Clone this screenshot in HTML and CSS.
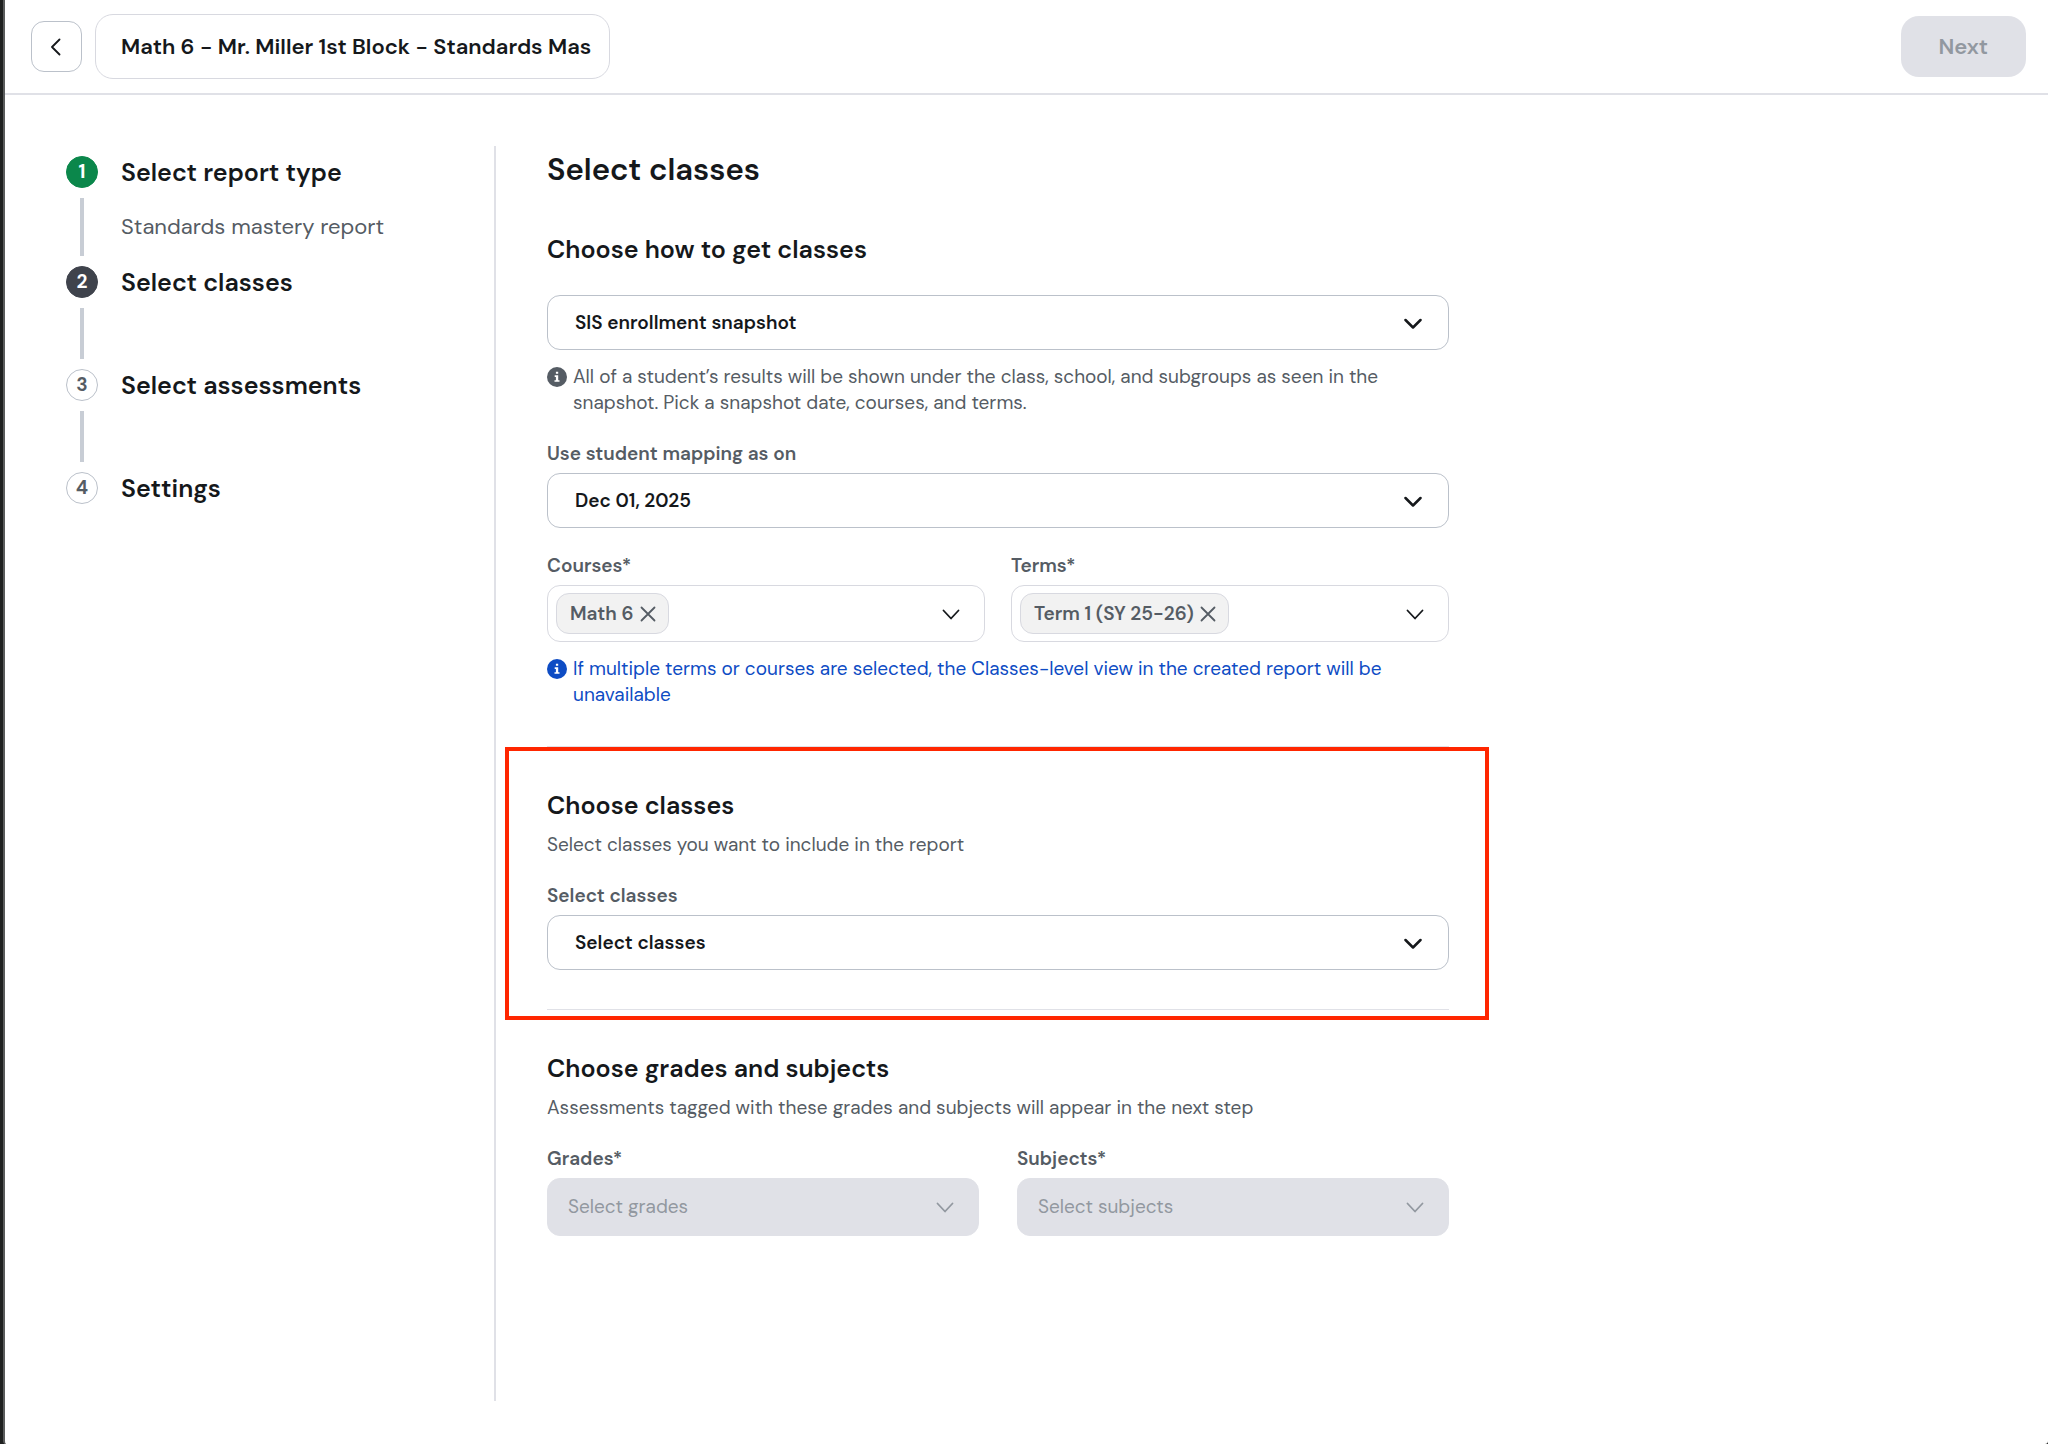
FILE: index.html
```html
<!DOCTYPE html>
<html lang="en">
<head>
  <meta charset="utf-8">
  <meta name="viewport" content="width=device-width, initial-scale=1">
  <title>Create report – Select classes</title>
  <link rel="stylesheet" href="styles.css">
</head>
<body>
  <div class="page">
    <header class="topbar">
      <button class="back-button" type="button" aria-label="Back">
        <svg class="back-icon" viewBox="0 0 12 18" aria-hidden="true"><path d="M8.500 1.500 1 9l7.500 7.500"/></svg>
      </button>
      <input class="title-input" type="text" aria-label="Report name" value="Math 6 - Mr. Miller 1st Block - Standards Mastery">
      <button class="next-button" type="button" disabled>Next</button>
    </header>

    <div class="content">
      <nav class="sidebar" aria-label="Report steps">
        <ol class="steps">
          <li class="step">
            <div class="step-rail"><span class="step-marker is-done">1</span><span class="step-line"></span></div>
            <div class="step-body">
              <p class="step-title">Select report type</p>
              <p class="step-detail">Standards mastery report</p>
            </div>
          </li>
          <li class="step" aria-current="step">
            <div class="step-rail"><span class="step-marker is-current">2</span><span class="step-line"></span></div>
            <div class="step-body"><p class="step-title">Select classes</p></div>
          </li>
          <li class="step">
            <div class="step-rail"><span class="step-marker">3</span><span class="step-line"></span></div>
            <div class="step-body"><p class="step-title">Select assessments</p></div>
          </li>
          <li class="step">
            <div class="step-rail"><span class="step-marker">4</span></div>
            <div class="step-body"><p class="step-title">Settings</p></div>
          </li>
        </ol>
      </nav>

      <main class="main">
        <form class="form">
          <h1 class="page-title">Select classes</h1>

          <section class="section">
            <h2 class="section-title" id="source-title">Choose how to get classes</h2>
            <div class="select source-select">
              <select class="select-control" aria-labelledby="source-title"><option>SIS enrollment snapshot</option></select>
              <svg class="chevron is-bold" viewBox="0 -2 18 14" aria-hidden="true"><path d="m1.500 2 7.500 7.500L16.500 2"/></svg>
            </div>
            <p class="note">
              <svg class="note-icon" viewBox="0 0 20 20" aria-hidden="true"><circle cx="10" cy="10" r="10"/><path class="note-glyph" d="M8.900 4.800h2.300v2H8.900zM7.700 8.300h3.500v4.900h1.300v1.600H7.500v-1.600h1.400V9.900H7.700z"/></svg>
              <span>All of a student’s results will be shown under the class, school, and subgroups as seen in the snapshot. Pick a snapshot date, courses, and terms.</span>
            </p>

            <div class="field">
              <label class="label" for="mapping-date">Use student mapping as on</label>
              <div class="select">
                <select class="select-control" id="mapping-date"><option>Dec 01, 2025</option></select>
                <svg class="chevron is-bold" viewBox="0 -2 18 14" aria-hidden="true"><path d="m1.500 2 7.500 7.500L16.500 2"/></svg>
              </div>
            </div>

            <div class="field-row">
              <div class="field">
                <label class="label" for="courses">Courses*</label>
                <div class="multiselect">
                  <span class="chip">Math 6
                    <button class="chip-remove" type="button" aria-label="Remove Math 6"><svg class="chip-icon" viewBox="0 0 16 16" aria-hidden="true"><path d="m1.500 1.500 13 13m0-13-13 13"/></svg></button>
                  </span>
                  <input class="multiselect-input" id="courses" type="text">
                  <svg class="chevron" viewBox="0 -2 18 14" aria-hidden="true"><path d="m1.500 1.500 7.500 8 7.500-8"/></svg>
                </div>
              </div>
              <div class="field">
                <label class="label" for="terms">Terms*</label>
                <div class="multiselect">
                  <span class="chip">Term 1 (SY 25-26)
                    <button class="chip-remove" type="button" aria-label="Remove Term 1"><svg class="chip-icon" viewBox="0 0 16 16" aria-hidden="true"><path d="m1.500 1.500 13 13m0-13-13 13"/></svg></button>
                  </span>
                  <input class="multiselect-input" id="terms" type="text">
                  <svg class="chevron" viewBox="0 -2 18 14" aria-hidden="true"><path d="m1.500 1.500 7.500 8 7.500-8"/></svg>
                </div>
              </div>
            </div>
            <p class="note is-info">
              <svg class="note-icon" viewBox="0 0 20 20" aria-hidden="true"><circle cx="10" cy="10" r="10"/><path class="note-glyph" d="M8.900 4.800h2.300v2H8.900zM7.700 8.300h3.500v4.900h1.300v1.600H7.500v-1.600h1.400V9.900H7.700z"/></svg>
              <span>If multiple terms or courses are selected, the Classes-level view in the created report will be unavailable</span>
            </p>
          </section>

          <section class="section is-divided is-highlighted">
            <h2 class="section-title">Choose classes</h2>
            <p class="section-detail">Select classes you want to include in the report</p>
            <div class="field">
              <label class="label" for="classes">Select classes</label>
              <div class="select">
                <select class="select-control" id="classes"><option>Select classes</option></select>
                <svg class="chevron is-bold" viewBox="0 -2 18 14" aria-hidden="true"><path d="m1.500 2 7.500 7.500L16.500 2"/></svg>
              </div>
            </div>
          </section>

          <section class="section is-divided">
            <h2 class="section-title">Choose grades and subjects</h2>
            <p class="section-detail">Assessments tagged with these grades and subjects will appear in the next step</p>
            <div class="field-row is-wide">
              <div class="field">
                <label class="label" for="grades">Grades*</label>
                <div class="select is-disabled">
                  <select class="select-control" id="grades" disabled><option>Select grades</option></select>
                  <svg class="chevron" viewBox="0 -2 18 14" aria-hidden="true"><path d="m1.500 1.500 7.500 8 7.500-8"/></svg>
                </div>
              </div>
              <div class="field">
                <label class="label" for="subjects">Subjects*</label>
                <div class="select is-disabled">
                  <select class="select-control" id="subjects" disabled><option>Select subjects</option></select>
                  <svg class="chevron" viewBox="0 -2 18 14" aria-hidden="true"><path d="m1.500 1.500 7.500 8 7.500-8"/></svg>
                </div>
              </div>
            </div>
          </section>
        </form>
      </main>
    </div>
  </div>
</body>
</html>
```
FILE: styles.css
```css
:root {
  --ink: #15181b;
  --muted: #555c64;
  --disabled: #9298a0;
  --line: #e0e1e7;
  --line-control: #d8d9e0;
  --line-strong: #bbc1ca;
  --rail: #c8cdd5;
  --green: #0b874b;
  --slate: #3f434c;
  --blue: #0e4cc4;
  --red: #ff2600;
}

* {
  box-sizing: border-box;
}

body {
  margin: 0;
  padding-left: 3px;
  background: #1f2120;
  color: var(--ink);
  font-family: "DM Sans", Inter, sans-serif;
  font-size: 19px;
  line-height: 26px;
}

h1, h2, p, ol {
  margin: 0;
  padding: 0;
}

button, input, select {
  font: inherit;
  color: inherit;
}

svg {
  display: block;
  fill: none;
  stroke: currentColor;
  stroke-width: 1.8;
  stroke-linecap: round;
  stroke-linejoin: round;
}

.page {
  display: flex;
  flex-direction: column;
  min-height: 100vh;
  border-left: 2px solid #5a5c5c;
  border-radius: 0 0 3px 3px;
  background: #fff;
}

/* Top bar */
.topbar {
  display: flex;
  align-items: center;
  gap: 13px;
  padding: 14px 22px 14px 26px;
  border-bottom: 2px solid var(--line);
}

.back-button {
  display: grid;
  place-items: center;
  width: 51px;
  height: 51px;
  padding: 0;
  border: 1px solid var(--line-strong);
  border-radius: 13px;
  background: #fff;
}

.back-icon {
  width: 12px;
  height: 18px;
}

.title-input {
  width: 515px;
  height: 65px;
  padding: 0 18px 0 25px;
  border: 1px solid var(--line-control);
  border-radius: 18px;
  background: #fff;
  font-size: 22px;
  font-weight: 600;
}

.next-button {
  height: 61px;
  margin-left: auto;
  padding: 0 38px;
  border: 0;
  border-radius: 18px;
  background: var(--line);
  color: var(--disabled);
  font-size: 22px;
  font-weight: 600;
}

/* Two-column body */
.content {
  display: flex;
  flex: 1;
  padding: 51px 22px 43px 61px;
}

.sidebar {
  flex: 0 0 430px;
  padding-top: 10px;
  border-right: 2px solid var(--line);
}

.steps {
  list-style: none;
}

.step {
  display: flex;
  gap: 23px;
  min-height: 103px;
}

.step-rail {
  display: flex;
  flex-direction: column;
  align-items: center;
}

.step-marker {
  display: grid;
  place-items: center;
  width: 32px;
  height: 32px;
  border: 1px solid var(--line-strong);
  border-radius: 50%;
  color: var(--muted);
  font-size: 19px;
  font-weight: 700;
}

.step-marker.is-done {
  border-color: var(--green);
  background: var(--green);
  color: #fff;
}

.step-marker.is-current {
  border-color: var(--slate);
  background: var(--slate);
  color: #fff;
}

.step-line {
  flex: 1;
  width: 4px;
  margin: 10px 0;
  background: var(--rail);
}

.step-title {
  font-size: 25px;
  font-weight: 600;
  line-height: 34px;
}

.step-detail {
  padding: 21px 0 23px;
  color: var(--muted);
  font-size: 22px;
  line-height: 32px;
}

/* Form */
.main {
  flex: 1;
  padding-left: 51px;
}

.form {
  max-width: 902px;
}

.page-title {
  margin-bottom: 40px;
  font-size: 31px;
  font-weight: 600;
  line-height: 48px;
}

.section {
  padding-bottom: 38px;
}

.section.is-divided {
  padding-top: 43px;
  padding-bottom: 39px;
  border-top: 1px solid var(--line);
}

.section-title {
  font-size: 25px;
  font-weight: 600;
  line-height: 32px;
}

.section-detail {
  margin-top: 10px;
  color: var(--muted);
}

/* Outline drawn around the section being pointed out */
.is-highlighted {
  position: relative;
}

.is-highlighted::after {
  content: "";
  position: absolute;
  inset: 0 -40px -11px -42px;
  border: 4px solid var(--red);
  pointer-events: none;
}

.field {
  min-width: 0;
  margin-top: 25px;
}

.field-row {
  display: grid;
  grid-template-columns: 1fr 1fr;
  gap: 26px;
}

.field-row.is-wide {
  gap: 38px;
}

.label {
  display: block;
  margin-bottom: 6px;
  color: var(--muted);
  font-weight: 600;
}

.select {
  display: grid;
  align-items: center;
}

.source-select {
  margin-top: 29px;
}

.select > * {
  grid-area: 1 / 1;
}

.select-control {
  appearance: none;
  width: 100%;
  height: 55px;
  padding: 0 60px 0 27px;
  border: 1px solid var(--line-strong);
  border-radius: 13px;
  background: #fff;
  font-weight: 600;
}

.chevron {
  width: 18px;
  height: 14px;
  pointer-events: none;
}

.chevron.is-bold {
  stroke-width: 2.5;
}

.select .chevron {
  justify-self: end;
  margin-right: 27px;
}

.is-disabled .select-control {
  height: 58px;
  padding-left: 20px;
  border-color: var(--line);
  background: var(--line);
  color: var(--disabled);
  font-weight: 400;
  opacity: 1;
}

.select.is-disabled .chevron {
  margin-right: 25px;
  color: var(--disabled);
}

.multiselect {
  display: flex;
  align-items: center;
  padding: 7px 24px 7px 8px;
  border: 1px solid var(--line-control);
  border-radius: 13px;
}

.multiselect-input {
  flex: 1;
  min-width: 0;
  width: 0;
  border: 0;
  background: none;
}

.chip {
  display: flex;
  align-items: center;
  gap: 6px;
  height: 41px;
  padding: 0 12px 0 13px;
  border: 1px solid var(--line-control);
  border-radius: 13px;
  background: #f2f2f2;
  color: var(--muted);
  font-weight: 600;
  white-space: nowrap;
}

.chip-remove {
  padding: 0;
  border: 0;
  background: none;
}

.chip-icon {
  width: 16px;
  height: 16px;
}

.note {
  display: flex;
  gap: 6px;
  margin-top: 14px;
  color: var(--muted);
}

.note-icon {
  flex: none;
  width: 20px;
  height: 20px;
  margin-top: 3px;
  fill: currentColor;
  stroke: none;
}

.note-glyph {
  fill: #fff;
}

.note.is-info {
  color: var(--blue);
}
```
